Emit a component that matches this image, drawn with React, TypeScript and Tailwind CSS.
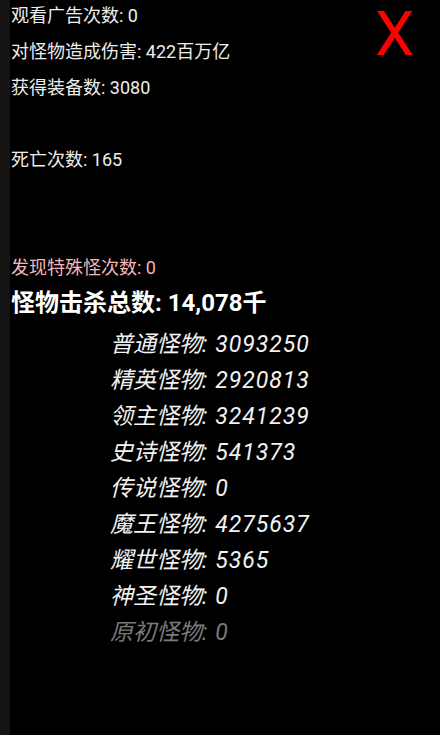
import React from "react";

const font = { fontFamily: 'Roboto, "Noto Sans CJK SC", sans-serif' };

const kills: [string, string, boolean?][] = [
  ["普通怪物", "3093250"],
  ["精英怪物", "2920813"],
  ["领主怪物", "3241239"],
  ["史诗怪物", "541373"],
  ["传说怪物", "0"],
  ["魔王怪物", "4275637"],
  ["耀世怪物", "5365"],
  ["神圣怪物", "0"],
  ["原初怪物", "0", true],
];

export default function App() {
  return (
    <div
      className="relative flex w-[440px] h-[735px] bg-black overflow-hidden text-[#ededed] font-['Roboto','Noto_Sans_CJK_SC',sans-serif]"
      style={font}
    >
      <div className="w-[10px] h-full bg-[#141414] shrink-0" />
      <div className="flex flex-col mt-[-3px] pl-[1px] flex-1">
        <div className="h-[36px] flex items-center text-[18px]">观看广告次数: 0</div>
        <div className="h-[36px] flex items-center text-[18px]">对怪物造成伤害: 422百万亿</div>
        <div className="h-[36px] flex items-center text-[18px]">获得装备数: 3080</div>
        <div className="h-[36px]" />
        <div className="h-[36px] flex items-center text-[18px]">死亡次数: 165</div>
        <div className="h-[36px]" />
        <div className="h-[36px]" />
        <div className="h-[36px] flex items-center text-[18px] text-[#f0b8bc]">发现特殊怪次数: 0</div>
        <div className="h-[42px] flex items-start text-[24px] font-bold leading-[36px] text-white">
          怪物击杀总数: 14,078千
        </div>
        <div className="flex flex-col pl-[99px]">
          {kills.map(([name, val, dim]) => (
            <div
              key={name}
              className={`h-[36px] flex items-center text-[23px] italic ${dim ? "text-[#7a7a7a]" : "text-[#f2f2f2]"}`}
            >
              <span>{name}</span>
              <span className="tracking-[1px]">: {val}</span>
            </div>
          ))}
        </div>
      </div>
      <div className="absolute top-[4px] right-[28px] flex">
        <span className="text-[56px] leading-none text-[#ff0000] scale-x-[1.12] scale-y-[1.08] origin-top">X</span>
      </div>
    </div>
  );
}
